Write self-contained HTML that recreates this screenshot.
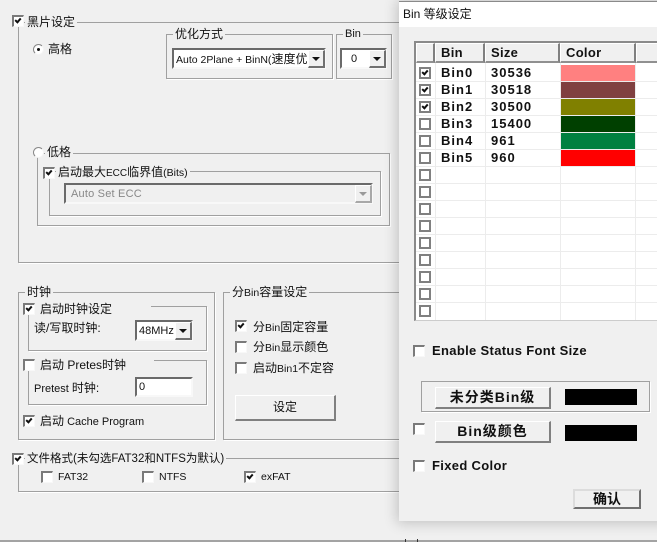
<!DOCTYPE html>
<html><head><meta charset="utf-8"><style>
html,body{margin:0;padding:0;width:657px;height:542px;overflow:hidden;background:#f0f0f0}
body{position:relative;font-family:"Liberation Sans","Noto Sans CJK SC",sans-serif;color:#111}
div,span{position:absolute;box-sizing:border-box}
i{font-style:normal}
.g{border:1px solid #a0a0a0;box-shadow:1px 1px 0 #fff}
.t{white-space:nowrap;font-size:12px;line-height:14px;background:#f0f0f0;padding:0 2px}
.t i{font-size:10.5px}
.n{background:none;padding:0}
.c{width:12px;height:12px;background:#fff;border:solid;border-width:2px 1px 1px 2px;border-color:#7a7a7a #f8f8f8 #f8f8f8 #7a7a7a}
.c.on:after,.k.on:after{content:"";position:absolute;left:2px;top:0;width:2px;height:4px;border:solid #111;border-width:0 2px 2px 0;transform:rotate(42deg)}
.k{width:12px;height:12px;background:#fff;border:2px solid #808080}
.k.on:after{left:2px;top:0}
.r{width:11px;height:11px;border-radius:50%;background:#fff;border:1.5px solid;border-color:#888 #f4f4f4 #f4f4f4 #888}
.s{background:#fff;border:2px solid;border-color:#6a6a6a #f8f8f8 #f8f8f8 #6a6a6a}
.a{background:#f0f0f0;border:solid;border-width:1px 2px 2px 1px;border-color:#fff #707070 #707070 #fff}
.a:after{content:"";position:absolute;left:50%;top:50%;margin:-2px 0 0 -4px;border:4px solid transparent;border-top:4px solid #111;border-bottom:0}
.a.ad{border-color:#fff #a8a8a8 #a8a8a8 #fff}
.a.ad:after{border-top-color:#999}
.btn{background:#f0f0f0;border:solid;border-width:1px 2px 2px 1px;border-color:#fff #808080 #808080 #fff;text-align:center;font-weight:bold;font-size:14px;letter-spacing:1px}
.d{font-weight:bold;font-size:13px;letter-spacing:1px;line-height:16px;white-space:nowrap}
.e{letter-spacing:.33px}
.hd{letter-spacing:.3px}
.h{top:43px;height:20px;background:#f0f0f0;border:solid;border-width:1px 2px 2px 1px;border-color:#fff #808080 #909090 #fff}
.l{background:#ececec}
</style></head><body>

<div style="left:0;top:540px;width:657px;height:2px;background:#a3a3a3"></div>
<div style="left:405px;top:539px;width:1px;height:3px;background:#333"></div>
<div style="left:417px;top:539px;width:1px;height:3px;background:#333"></div>

<!-- chip group -->
<div class="g" style="left:18px;top:22px;width:400px;height:241px"></div>
<div class="t" style="left:25px;top:15px">黑片设定</div>
<div class="c on" style="left:12px;top:15px"></div>
<div class="r" style="left:33px;top:44px"><span style="left:2.5px;top:2.5px;width:3px;height:3px;background:#111;border-radius:50%"></span></div>
<div class="t n" style="left:48px;top:42px">高格</div>

<div class="g" style="left:166px;top:34px;width:167px;height:45px"></div>
<div class="t" style="left:173px;top:27px">优化方式</div>
<div class="s" style="left:172px;top:48px;width:154px;height:21px"></div>
<div class="t n" style="left:176px;top:52px;width:131px;overflow:hidden;font-size:10.5px">Auto 2Plane + BinN(<span style="position:static;font-size:12px">速度优</span></div>
<div class="a" style="left:308px;top:50px;width:17px;height:18px"></div>
<div class="g" style="left:336px;top:34px;width:56px;height:45px"></div>
<div class="t" style="left:343px;top:27px;font-size:11px">Bin</div>
<div class="s" style="left:340px;top:48px;width:47px;height:21px"></div>
<div class="t n" style="left:351px;top:52px;font-size:11px">0</div>
<div class="a" style="left:369px;top:50px;width:17px;height:18px"></div>

<div class="g" style="left:37px;top:153px;width:353px;height:73px"></div>
<div class="r" style="left:33px;top:147px"></div>
<div class="t" style="left:45px;top:145px;">低格</div>
<div class="g" style="left:49px;top:171px;width:332px;height:45px"></div>
<div class="t" style="left:56px;top:165px">启动最大<i style="font-size:10px">ECC</i>临界值<i style="font-size:10.5px">(Bits)</i></div>
<div class="c on" style="left:43px;top:167px"></div>
<div class="s" style="left:64px;top:183px;width:309px;height:21px;background:#f0f0f0"></div>
<div class="t n" style="left:71px;top:187px;color:#888;font-size:11px;letter-spacing:.2px">Auto Set ECC</div>
<div class="a ad" style="left:355px;top:185px;width:17px;height:18px"></div>

<!-- clock -->
<div class="g" style="left:18px;top:292px;width:197px;height:148px"></div>
<div class="t" style="left:25px;top:285px">时钟</div>
<div class="g" style="left:28px;top:306px;width:179px;height:45px;border-top-color:#f0f0f0"></div>
<div style="left:151px;top:306px;width:56px;height:1px;background:#a0a0a0"></div>
<div class="c on" style="left:23px;top:303px"></div>
<div class="t n" style="left:40px;top:302px">启动时钟设定</div>
<div class="t n" style="left:34px;top:321px">读/写取时钟:</div>
<div class="s" style="left:135px;top:320px;width:58px;height:21px"></div>
<div class="t n" style="left:139px;top:324px;font-size:11px">48MHz</div>
<div class="a" style="left:175px;top:322px;width:17px;height:18px"></div>

<div class="g" style="left:28px;top:360px;width:179px;height:45px;border-top-color:#f0f0f0"></div>
<div style="left:154px;top:360px;width:53px;height:1px;background:#a0a0a0"></div>
<div class="c" style="left:23px;top:359px"></div>
<div class="t n" style="left:40px;top:358px">启动 Pretes时钟</div>
<div class="t n" style="left:34px;top:381px;font-size:11px">Pretest <span style="position:static;font-size:12px">时钟:</span></div>
<div class="s" style="left:135px;top:377px;width:58px;height:20px"></div>
<div class="t n" style="left:139px;top:380px;font-size:11px">0</div>
<div class="c on" style="left:23px;top:415px"></div>
<div class="t n" style="left:40px;top:414px"><span style="position:static;font-size:12px">启动</span><span style="position:static;font-size:11px"> Cache Program</span></div>

<!-- bin -->
<div class="g" style="left:223px;top:292px;width:200px;height:148px"></div>
<div class="t" style="left:230px;top:285px">分<i>Bin</i>容量设定</div>
<div class="c on" style="left:235px;top:320px"></div>
<div class="t n" style="left:253px;top:320px">分<i>Bin</i>固定容量</div>
<div class="c" style="left:235px;top:341px"></div>
<div class="t n" style="left:253px;top:340px">分<i>Bin</i>显示颜色</div>
<div class="c" style="left:235px;top:362px"></div>
<div class="t n" style="left:253px;top:361px">启动<i>Bin1</i>不定容</div>
<div class="btn" style="left:235px;top:395px;width:101px;height:26px;font-weight:normal;font-size:12px;line-height:23px;letter-spacing:0">设定</div>

<!-- file -->
<div class="g" style="left:18px;top:458px;width:400px;height:34px"></div>
<div class="t" style="left:25px;top:452px;font-size:11.5px">文件格式(未勾选FAT32和NTFS为默认)</div>
<div class="c on" style="left:12px;top:453px"></div>
<div class="c" style="left:41px;top:471px"></div>
<div class="t n" style="left:58px;top:470px;font-size:10.5px">FAT32</div>
<div class="c" style="left:142px;top:471px"></div>
<div class="t n" style="left:159px;top:470px;font-size:10.5px">NTFS</div>
<div class="c on" style="left:244px;top:471px"></div>
<div class="t n" style="left:261px;top:470px;font-size:10.5px">exFAT</div>

<!-- dialog -->
<div style="left:399px;top:2px;width:270px;height:519px;background:#f0f0f0;box-shadow:0 0 13px 2px rgba(0,0,0,.2)"></div>
<div style="left:399px;top:1px;width:258px;height:1px;background:#8a8a8a"></div>
<div style="left:399px;top:2px;width:258px;height:25px;background:#fff"></div>
<div class="t n" style="left:403px;top:7px">Bin 等级设定</div>

<!-- grid -->
<div style="left:414px;top:41px;width:243px;height:280px;background:#fff;border:solid #8a8a8a;border-width:2px 0 0 2px;border-bottom:1px solid #ccc"></div>
<div class="h" style="left:416px;width:19px"></div>
<div class="h" style="left:435px;width:50px"></div>
<div class="h" style="left:485px;width:75px"></div>
<div class="h" style="left:560px;width:76px"></div>
<div class="h" style="left:636px;width:30px"></div>
<div class="d hd" style="left:441px;top:45px">Bin</div>
<div class="d hd" style="left:491px;top:45px">Size</div>
<div class="d hd" style="left:566px;top:45px">Color</div>

<div class="l" style="left:435px;top:63px;width:1px;height:257px"></div>
<div class="l" style="left:485px;top:63px;width:1px;height:257px"></div>
<div class="l" style="left:560px;top:63px;width:1px;height:257px"></div>
<div class="l" style="left:635px;top:63px;width:1px;height:257px"></div>
<div class="l" style="left:416px;top:81px;width:241px;height:1px"></div>
<div class="l" style="left:416px;top:98px;width:241px;height:1px"></div>
<div class="l" style="left:416px;top:115px;width:241px;height:1px"></div>
<div class="l" style="left:416px;top:132px;width:241px;height:1px"></div>
<div class="l" style="left:416px;top:149px;width:241px;height:1px"></div>
<div class="l" style="left:416px;top:166px;width:241px;height:1px"></div>
<div class="l" style="left:416px;top:183px;width:241px;height:1px"></div>
<div class="l" style="left:416px;top:200px;width:241px;height:1px"></div>
<div class="l" style="left:416px;top:217px;width:241px;height:1px"></div>
<div class="l" style="left:416px;top:234px;width:241px;height:1px"></div>
<div class="l" style="left:416px;top:251px;width:241px;height:1px"></div>
<div class="l" style="left:416px;top:268px;width:241px;height:1px"></div>
<div class="l" style="left:416px;top:285px;width:241px;height:1px"></div>
<div class="l" style="left:416px;top:302px;width:241px;height:1px"></div>

<div style="left:561px;top:65px;width:74px;height:16px;background:#ff8080"></div>
<div style="left:561px;top:82px;width:74px;height:16px;background:#804040"></div>
<div style="left:561px;top:99px;width:74px;height:16px;background:#808000"></div>
<div style="left:561px;top:116px;width:74px;height:16px;background:#004000"></div>
<div style="left:561px;top:133px;width:74px;height:16px;background:#008040"></div>
<div style="left:561px;top:150px;width:74px;height:16px;background:#ff0000"></div>

<div class="d" style="left:441px;top:65px">Bin0</div><div class="d" style="left:491px;top:65px">30536</div>
<div class="d" style="left:441px;top:82px">Bin1</div><div class="d" style="left:491px;top:82px">30518</div>
<div class="d" style="left:441px;top:99px">Bin2</div><div class="d" style="left:491px;top:99px">30500</div>
<div class="d" style="left:441px;top:116px">Bin3</div><div class="d" style="left:491px;top:116px">15400</div>
<div class="d" style="left:441px;top:133px">Bin4</div><div class="d" style="left:491px;top:133px">961</div>
<div class="d" style="left:441px;top:150px">Bin5</div><div class="d" style="left:491px;top:150px">960</div>

<div class="k on" style="left:419px;top:67px"></div>
<div class="k on" style="left:419px;top:84px"></div>
<div class="k on" style="left:419px;top:101px"></div>
<div class="k" style="left:419px;top:118px"></div>
<div class="k" style="left:419px;top:135px"></div>
<div class="k" style="left:419px;top:152px"></div>
<div class="k" style="left:419px;top:169px"></div>
<div class="k" style="left:419px;top:186px"></div>
<div class="k" style="left:419px;top:203px"></div>
<div class="k" style="left:419px;top:220px"></div>
<div class="k" style="left:419px;top:237px"></div>
<div class="k" style="left:419px;top:254px"></div>
<div class="k" style="left:419px;top:271px"></div>
<div class="k" style="left:419px;top:288px"></div>
<div class="k" style="left:419px;top:305px"></div>

<div class="c" style="left:413px;top:345px"></div>
<div class="d e" style="left:432px;top:343px">Enable Status Font Size</div>

<div class="g" style="left:421px;top:381px;width:229px;height:31px"></div>
<div class="btn" style="left:435px;top:387px;width:116px;height:22px;line-height:19px">未分类Bin级</div>
<div style="left:565px;top:389px;width:72px;height:16px;background:#000"></div>
<div class="c" style="left:413px;top:423px"></div>
<div class="btn" style="left:435px;top:421px;width:116px;height:22px;line-height:19px">Bin级颜色</div>
<div style="left:565px;top:425px;width:72px;height:16px;background:#000"></div>
<div class="c" style="left:413px;top:460px"></div>
<div class="d e" style="left:432px;top:458px">Fixed Color</div>
<div class="btn" style="left:573px;top:489px;width:68px;height:20px;line-height:17px;letter-spacing:0;border:2px solid;border-color:#dcdcdc #707070 #707070 #dcdcdc">确认</div>

</body></html>
